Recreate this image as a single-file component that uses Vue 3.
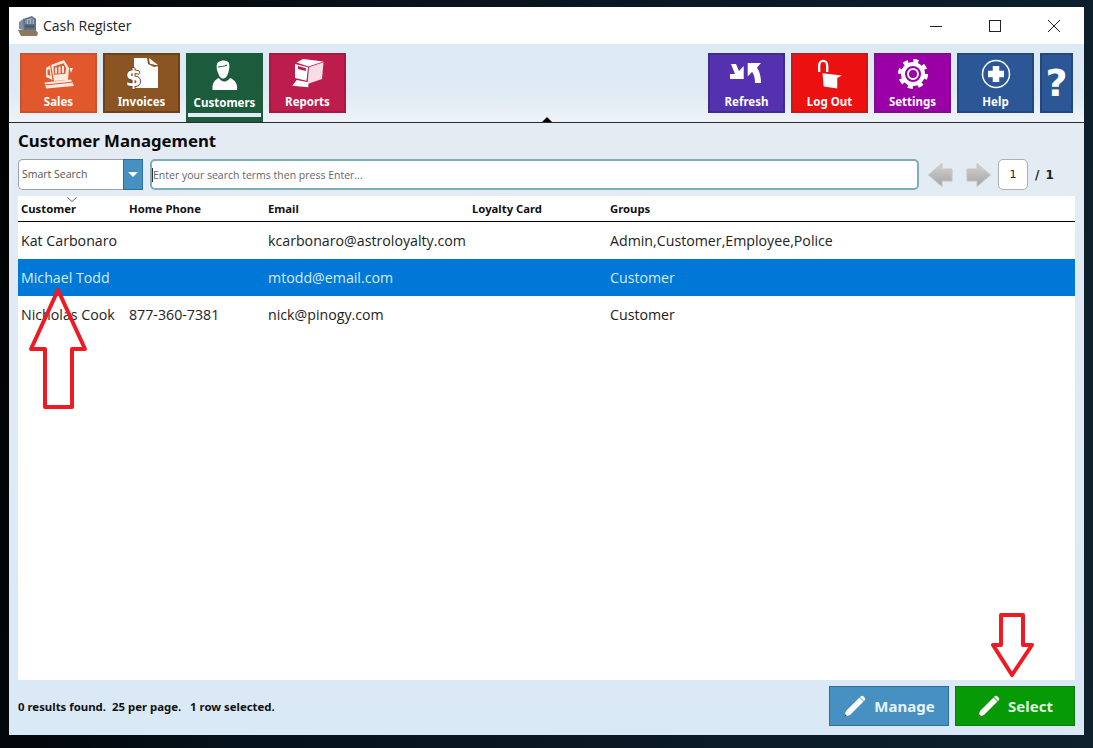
<script setup>
const columns = [
  { label: 'Customer', key: 'name' },
  { label: 'Home Phone', key: 'phone' },
  { label: 'Email', key: 'email' },
  { label: 'Loyalty Card', key: 'card' },
  { label: 'Groups', key: 'groups' }
]
const rows = [
  { name: 'Kat Carbonaro', phone: '', email: 'kcarbonaro@astroloyalty.com', card: '', groups: 'Admin,Customer,Employee,Police' },
  { name: 'Michael Todd', phone: '', email: 'mtodd@email.com', card: '', groups: 'Customer', selected: true },
  { name: 'Nicholas Cook', phone: '877-360-7381', email: 'nick@pinogy.com', card: '', groups: 'Customer' }
]
</script>

<template>
  <div class="desktop">
    <div class="window">
      <header class="titlebar">
        <svg class="app-icon" width="20" height="20" viewBox="0 0 20 20">
          <path d="M0 14l17-1 3 4-1 3H3z" fill="#8a7a5e" />
          <path d="M5 3l9-3 4 3v11H5z" fill="#5f7088" />
          <path d="M1 6l4-3 1 11-5-1z" fill="#7f8ea3" />
          <path d="M7 4l7-2 2 2v4H7z" fill="#aab5c4" />
          <path d="M7 10h9v1H7zM8 4v4M11 4v4M14 3v5" stroke="#3d4a5c" stroke-width=".8" fill="none" />
        </svg>
        <span class="app-title">Cash Register</span>
        <div class="win-controls">
          <svg width="14" height="14" viewBox="0 0 14 14"><path d="M1 7.500h12" stroke="#222" /></svg>
          <svg width="14" height="14" viewBox="0 0 14 14"><rect x="1.500" y="1.500" width="11" height="11" fill="none" stroke="#222" /></svg>
          <svg width="14" height="14" viewBox="0 0 14 14"><path d="M1 1l12 12M13 1L1 13" stroke="#222" /></svg>
        </div>
      </header>

      <nav class="toolbar">
        <button class="tile sales">
          <svg width="30" height="32" viewBox="0 0 30 32" fill="#fbe9e1">
            <path d="M7 7L20 2l5 8-1 12-14 1z" />
            <path d="M9.500 8.500l10-3.200 2.500 4.500-.5 6-11.500 1z" fill="#e0582b" />
            <path d="M11 9.500h2v6h-2zM14.500 8.500h2v7h-2zM18 8h2v7h-2z" />
            <path d="M2 10l4-2.500L8.500 22 2 19z" />
            <path d="M3.500 12l2-1 1 7-3-1.500z" fill="#e0582b" />
            <path d="M25.500 10H29l-2 5z" />
            <path d="M.5 24.500L27 21.500l3 6.500L2 30.500z" />
            <path d="M1 27l27-2.800" stroke="#e0582b" stroke-width="1" fill="none" />
          </svg>
          <span>Sales</span>
        </button>
        <button class="tile invoices">
          <span class="invoice-icon">
            <svg width="24" height="30" viewBox="0 0 24 30" fill="#fff">
              <path d="M0 0h13l1 6 6 3 4-1v22H0z" />
              <path d="M15 0l9 7-8 0z" />
              <path d="M14 0l1 6 9 2" fill="none" stroke="#8a5523" stroke-width="1" />
            </svg>
            <b class="dollar">$</b>
          </span>
          <span>Invoices</span>
        </button>
        <button class="tile customers active">
          <svg width="26" height="32" viewBox="0 0 26 32" fill="#fff">
            <path d="M5 5C6 1 15 0 17 4c1 4 0 9-2 13-3 4-7 3-8-1-2-4-3-7-2-11z" />
            <path d="M6 8c3-.5 6-.5 9-2" fill="none" stroke="#1c5c3c" stroke-width="1" />
            <path d="M.5 31C0 25 2 21 7 19c2 4 8 5 11 0 5 2 8 6 7 12z" />
          </svg>
          <span>Customers</span>
        </button>
        <button class="tile reports">
          <svg width="32" height="32" viewBox="0 0 32 32" fill="#fff">
            <path d="M4.500 4.500L11 1l20.500 2.500L16.500 8.500z" />
            <path d="M3 6l13 3.300-1.500 13.500L3 20z" />
            <path d="M17 9.300L31.500 4.300 30 21 15.500 26z" fill="#f7dde5" />
            <path d="M6 8l8 2.200-.3 2.800-7.700-2z" fill="#bd1d4d" />
            <path d="M4.700 22l11.600 2.300v5L.3 27.700z" />
          </svg>
          <span>Reports</span>
        </button>

        <div class="spacer"><span class="collapse-caret"></span></div>

        <button class="tile refresh">
          <svg width="34" height="32" viewBox="0 0 34 26" fill="#fff">
            <path d="M1 3h5l3 7 4.700-5v13H0v-5h5z" />
            <path d="M17.700 2H31l-4 4.500c3 4.500 4 10.500 4 15.500h-6c0-5-1-9-3-11l-4.300 4.500z" />
          </svg>
          <span>Refresh</span>
        </button>
        <button class="tile logout">
          <svg width="28" height="32" viewBox="0 0 28 34">
            <path d="M2.500 15V8c0-6.500 8.500-6.500 8.500 0v7" fill="none" stroke="#fff" stroke-width="2.500" />
            <path d="M6 16.300l20.700 2.400-5 2.600v11L7.300 30.300z" fill="#fff" />
          </svg>
          <span>Log Out</span>
        </button>
        <button class="tile settings">
          <svg width="30" height="32" viewBox="0 0 30 32">
            <circle cx="15" cy="16" r="13" fill="none" stroke="#fff" stroke-width="4" stroke-dasharray="5 5.210" />
            <circle cx="15" cy="16" r="10" fill="none" stroke="#fff" stroke-width="4" />
            <circle cx="15" cy="16" r="5" fill="none" stroke="#fff" stroke-width="2" />
          </svg>
          <span>Settings</span>
        </button>
        <button class="tile help">
          <svg width="30" height="32" viewBox="0 0 30 32">
            <circle cx="15" cy="16" r="13.500" fill="none" stroke="#fff" stroke-width="1.500" />
            <path d="M15 8v16M7 16h16" stroke="#fff" stroke-width="6.500" stroke-linejoin="round" />
          </svg>
          <span>Help</span>
        </button>
        <button class="tile question">?</button>
      </nav>

      <main class="content">
        <h1 class="heading">Customer Management</h1>

        <div class="search-row">
          <div class="search-type">
            <span class="search-type-label">Smart Search</span>
            <span class="search-type-drop"><i></i></span>
          </div>
          <div class="search-input"><span class="cursor"></span>Enter your search terms then press Enter...</div>
          <div class="pager">
            <svg width="25" height="24" viewBox="0 0 25 24">
              <defs>
                <linearGradient id="navGrad" x1="0" y1="0" x2="0" y2="1">
                  <stop offset="0" stop-color="#d4d4d4" />
                  <stop offset="1" stop-color="#a2a2a2" />
                </linearGradient>
              </defs>
              <path d="M.5 12L14 .5v5.500h10v12H14v5.500z" fill="url(#navGrad)" stroke="#c4c4c4" />
            </svg>
            <svg width="25" height="24" viewBox="0 0 25 24">
              <path d="M24.500 12L11 .5v5.500H1v12h10v5.500z" fill="url(#navGrad)" stroke="#c4c4c4" />
            </svg>
            <span class="page-box">1</span>
            <span class="page-total">/ 1</span>
          </div>
        </div>

        <section class="grid">
          <div class="grid-head">
            <div v-for="c in columns" :key="c.key" class="cell head-cell">{{ c.label }}</div>
            <svg class="sort-mark" width="10" height="5" viewBox="0 0 10 5"><path d="M.5.500L5 4.500 9.500.500" fill="none" stroke="#666" /></svg>
          </div>
          <div v-for="r in rows" :key="r.name" class="grid-row" :class="{ selected: r.selected }">
            <div v-for="c in columns" :key="c.key" class="cell">{{ r[c.key] }}</div>
          </div>
        </section>

        <footer class="footer">
          <span class="status">0 results found.&nbsp; 25 per page.&nbsp;&nbsp; 1 row selected.</span>
          <div class="actions">
            <button class="action manage">
              <svg width="24" height="24" viewBox="0 0 24 24" fill="#fff">
                <path d="M1 23l2-6L16.500 3.500l4 4L7 21z" />
                <path d="M17.500 2.500c1-1 2-1 3 0l1 1c1 1 1 2 0 3l-.5.500-4-4z" />
                <path d="M1 23l1-3 2 2z" fill="#1d4f72" />
              </svg>
              Manage
            </button>
            <button class="action select">
              <svg width="24" height="24" viewBox="0 0 24 24" fill="#fff">
                <path d="M1 23l2-6L16.500 3.500l4 4L7 21z" />
                <path d="M17.500 2.500c1-1 2-1 3 0l1 1c1 1 1 2 0 3l-.5.500-4-4z" />
                <path d="M1 23l1-3 2 2z" fill="#0b5f0b" />
              </svg>
              Select
            </button>
          </div>
        </footer>
      </main>

      <svg class="annotation" width="1075" height="728" viewBox="9 7 1075 728">
        <path d="M58 290L31 349H45V407H72V349H85Z" />
        <path d="M1001 615H1023V645H1032L1012 675L993 645H1001Z" />
      </svg>
    </div>
  </div>
</template>

<style>
html, body { margin: 0; background: #050b10; }
</style>

<style scoped>
.desktop {
  width: 1093px;
  height: 748px;
  box-sizing: border-box;
  padding: 7px 9px 13px;
  overflow: hidden;
  background: linear-gradient(100deg, #000 0%, #06121b 30%, #0c1d2a 80%, #10212e 100%);
}
.window {
  position: relative;
  width: 1075px;
  height: 728px;
  display: flex;
  flex-direction: column;
  background: #dce9f4;
}
.titlebar {
  height: 37px;
  flex: none;
  display: flex;
  align-items: center;
  background: #fff;
  padding-left: 9px;
  box-sizing: border-box;
}
.app-icon { margin-right: 5px; }
.app-title {
  font: 14px "Open Sans", sans-serif;
  color: #222;
}
.win-controls {
  margin-left: auto;
  display: flex;
  gap: 45px;
  padding-right: 23px;
}
.win-controls svg { display: block; }
.toolbar {
  height: 79px;
  flex: none;
  box-sizing: border-box;
  display: flex;
  align-items: flex-start;
  gap: 6px;
  padding: 9px 11px 0;
  background: linear-gradient(180deg, #dceaf5 0%, #dfeaf4 60%, #eef3f8 100%);
  border-bottom: 1px solid #2b2b2b;
}
.spacer {
  flex: 1;
  height: 69px;
  position: relative;
}
.collapse-caret {
  position: absolute;
  left: 190px;
  bottom: 0;
  width: 0;
  height: 0;
  border: 5px solid transparent;
  border-top: 0;
  border-bottom: 5px solid #000;
}
.tile {
  width: 77px;
  height: 60px;
  padding: 3px 0 0;
  box-sizing: border-box;
  border: 2px solid;
  display: flex;
  flex-direction: column;
  align-items: center;
  justify-content: flex-start;
  gap: 4px;
  color: #fff;
  font: bold 11.5px/16px "Noto Sans", sans-serif;
  overflow: hidden;
}
.tile svg { flex: none; display: block; }
.sales { background: #e0582b; border-color: #c9542c; }
.invoices { background: #8a5523; border-color: #6e4118; }
.customers { background: #1c5c3c; border-color: #1c5c3c; }
.customers.active {
  height: 69px;
  padding-top: 4px;
  border-bottom: 5px solid #1c5c3c;
  position: relative;
}
.customers.active::after {
  content: "";
  position: absolute;
  left: -2px;
  right: -2px;
  bottom: 0;
  height: 4px;
  background: #e4edf5;
}
.reports { background: #bd1d4d; border-color: #a8183f; }
.refresh { background: #5431ae; border-color: #3f2c8c; }
.logout { background: #ed1010; border-color: #c81818; }
.settings { background: #9a00a6; border-color: #7c0f8a; }
.help { background: #2b5797; border-color: #22487d; }
.question {
  width: 33px;
  background: #2b5797;
  border-color: #22487d;
  justify-content: center;
  padding: 0;
  font: bold 38px/38px "DejaVu Sans", sans-serif;
}
.content {
  flex: 1;
  min-height: 0;
  display: flex;
  flex-direction: column;
  padding: 0 9px;
  background: linear-gradient(180deg, #e4ebf3 0%, #dae9f6 100%);
}
.heading {
  margin: 0;
  height: 36px;
  font: bold 16.8px/36px "Noto Sans", sans-serif;
  color: #0a0a0a;
}
.search-row {
  display: flex;
  align-items: center;
  height: 31px;
  flex: none;
}
.search-type {
  width: 125px;
  height: 31px;
  box-sizing: border-box;
  display: flex;
  background: #fff;
  border: 1px solid #9aa3ab;
  border-right: 0;
  border-radius: 5px 0 0 5px;
}
.search-type-label {
  flex: 1;
  font: 10.5px/29px "Open Sans", sans-serif;
  color: #555;
  padding-left: 3px;
}
.search-type-drop {
  width: 20px;
  height: 31px;
  margin-top: -1px;
  box-sizing: border-box;
  background: #4690c2;
  border: 1px solid #2f6f9c;
  display: flex;
  align-items: center;
  justify-content: center;
}
.search-type-drop i {
  width: 0;
  height: 0;
  border: 5px solid transparent;
  border-bottom: 0;
  border-top: 5px solid #fff;
}
.search-input {
  flex: none;
  width: 769px;
  height: 31px;
  margin-left: 7px;
  box-sizing: border-box;
  display: flex;
  align-items: center;
  background: #fff;
  border: 2px solid #7fadb8;
  border-radius: 5px;
  font: 10.5px "Open Sans", sans-serif;
  color: #666;
}
.cursor {
  width: 1px;
  height: 14px;
  background: #333;
}
.pager {
  flex: 1;
  display: flex;
  align-items: center;
  margin-left: 9px;
}
.pager svg:nth-child(2) { margin-left: 13px; margin-right: 7px; }
.page-box {
  width: 30px;
  height: 31px;
  box-sizing: border-box;
  display: flex;
  align-items: center;
  justify-content: center;
  background: #fff;
  border: 1px solid #a9b0b6;
  border-radius: 5px;
  font: 11px "DejaVu Sans", sans-serif;
  color: #222;
}
.page-total {
  margin-left: 7px;
  font: bold 12px "DejaVu Sans", sans-serif;
  color: #222;
  letter-spacing: 1px;
}
.grid {
  flex: none;
  height: 484px;
  margin-top: 6px;
  background: #fff;
}
.grid-head, .grid-row {
  display: grid;
  grid-template-columns: 108px 139px 204px 138px 1fr;
}
.grid-head {
  position: relative;
  height: 26px;
  box-sizing: border-box;
  border-bottom: 1px solid #000;
  align-items: center;
}
.sort-mark {
  position: absolute;
  left: 49px;
  top: 1px;
}
.cell { padding-left: 3px; white-space: nowrap; }
.head-cell {
  font: bold 11.3px "Noto Sans", sans-serif;
  color: #111;
}
.grid-row {
  height: 37px;
  align-items: center;
  font: 14.2px "Open Sans", sans-serif;
  color: #222;
}
.grid-row.selected {
  background: #0078d7;
  color: #d8ebfa;
}
.footer {
  flex: 1;
  display: flex;
  align-items: flex-start;
  justify-content: space-between;
}
.status {
  margin-top: 19px;
  font: bold 11.4px "Noto Sans", sans-serif;
  color: #111;
}
.actions {
  display: flex;
  gap: 6px;
  margin-top: 6px;
}
.action {
  width: 120px;
  height: 40px;
  box-sizing: border-box;
  display: flex;
  align-items: center;
  justify-content: center;
  gap: 7px;
  border: 1px solid;
  font: bold 15px "Noto Sans", sans-serif;
  padding: 0;
}
.manage { background: #4690c2; border-color: #2f6f9c; color: #e6f3fc; }
.select { background: #079a07; border-color: #0b7a0b; color: #dff5df; }
.annotation {
  position: absolute;
  left: 0;
  top: 0;
  pointer-events: none;
}
.annotation path {
  fill: none;
  stroke: #ed1c24;
  stroke-width: 4;
  stroke-linejoin: round;
}
.invoice-icon {
  position: relative;
  display: block;
  width: 32px;
  height: 32px;
}
.invoice-icon svg {
  position: absolute;
  right: 0;
  top: 0;
}
.dollar {
  position: absolute;
  left: 0;
  bottom: 0;
  font: bold 23px/24px "DejaVu Sans", sans-serif;
  color: #fff;
  text-shadow: 1px 0 #6e4118, -1px 0 #6e4118, 0 1px #6e4118, 0 -1px #6e4118;
}
</style>
